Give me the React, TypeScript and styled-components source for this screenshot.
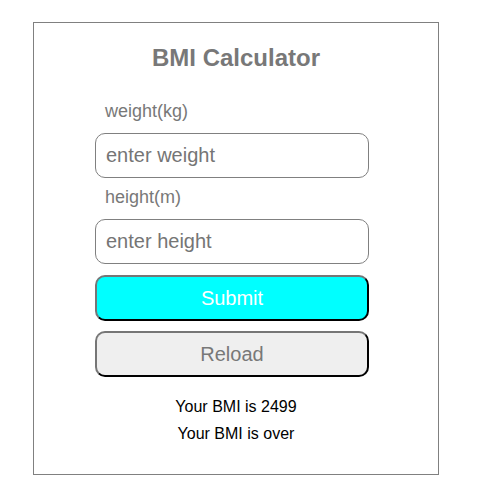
import React, { useState } from 'react'
import styled, { createGlobalStyle } from 'styled-components'

const GlobalStyle = createGlobalStyle`
    body {
        margin:0;
        background:white;
        font-family:"Liberation Sans", Arial, sans-serif;
    }
`
const Card = styled.div`
    box-sizing:border-box;
    width:406px;
    margin:22px 0 0 33px;
    padding:21px 0 31px;
    border:1px solid #808080;
`
const Title = styled.h1`
    margin:0 0 29px;
    font-size:24px;
    line-height:28px;
    font-weight:bold;
    color:#787878;
    text-align:center;
`
const Form = styled.form`
    width:274px;
    margin-left:61px;
    display:flex;
    flex-direction:column;
`
const Label = styled.label`
    padding-left:10px;
    font-size:18px;
    line-height:21px;
    color:#787878;
    margin-bottom:11px;
`
const Input = styled.input`
    box-sizing:border-box;
    height:45px;
    width:100%;
    padding:0 10px;
    margin-bottom:9px;
    border:1px solid #808080;
    border-radius:10px;
    font-family:inherit;
    font-size:20px;
    color:#333;
    outline:none;
    &::placeholder { color:#757575; }
`
const Button = styled.button<{primary?:boolean}>`
    box-sizing:border-box;
    height:46px;
    width:100%;
    margin-top:${(props)=>props.primary ? '2px' : '10px'};
    border:2px outset #222;
    border-radius:10px;
    background:${(props)=>props.primary ? '#00ffff' : '#efefef'};
    color:${(props)=>props.primary ? 'white' : '#787878'};
    font-family:inherit;
    font-size:20px;
`
const Result = styled.p`
    margin:0;
    font-size:16px;
    line-height:18px;
    color:black;
    text-align:center;
    &:first-of-type { margin-top:21px; }
    & + & { margin-top:9px; }
`

const App = () => {
    const [weight,setWeight] = useState('')
    const [height,setHeight] = useState('')
  return (
    <>
    <GlobalStyle />
    <Card>
        <Title>BMI Calculator</Title>
        <Form onSubmit={(e)=>e.preventDefault()}>
            <Label htmlFor="weight">weight(kg)</Label>
            <Input id="weight" value={weight} onChange={(e)=>setWeight(e.target.value)} placeholder="enter weight" />
            <Label htmlFor="height">height(m)</Label>
            <Input id="height" value={height} onChange={(e)=>setHeight(e.target.value)} placeholder="enter height" />
            <Button primary type="submit">Submit</Button>
            <Button type="button">Reload</Button>
        </Form>
        <Result>Your BMI is 2499</Result>
        <Result>Your BMI is over</Result>
    </Card>
    </>
  )
}

export default App
